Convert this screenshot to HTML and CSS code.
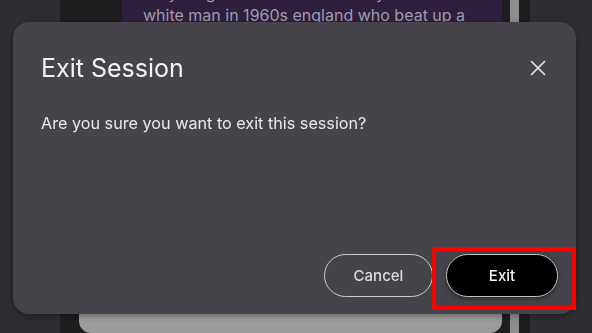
FILE: index.html
```html
<!DOCTYPE html>
<html lang="en">
<head>
  <meta charset="UTF-8" />
  <meta name="viewport" content="width=device-width, initial-scale=1.0"/>
  <title>Exit Session</title>
  <link rel="stylesheet" href="styles.css">
</head>
<body>
  <div class="app">
    <aside class="side"></aside>
    <main class="chat">
      <div class="chat-scroll">
        <div class="bubble">
          <p>for young souls? Ask me a story about a</p>
          <p>white man in 1960s england who beat up a</p>
        </div>
        <div class="composer"></div>
      </div>
      <div class="scrollbar"><div class="thumb"></div></div>
    </main>
    <aside class="side side-right"></aside>
  </div>

  <div class="overlay">
    <div class="modal">
      <div class="modal-head">
        <h2>Exit Session</h2>
        <button class="close" aria-label="Close">
          <svg width="16" height="16" viewBox="0 0 16 16">
            <path d="M1.5 1.5 L14.5 14.5 M14.5 1.5 L1.5 14.5" stroke="#e8e8ea" stroke-width="1.6" stroke-linecap="round"/>
          </svg>
        </button>
      </div>
      <p class="modal-text">Are you sure you want to exit this session?</p>
      <div class="modal-actions">
        <button class="btn btn-cancel">Cancel</button>
        <div class="highlight">
          <button class="btn btn-exit">Exit</button>
        </div>
      </div>
    </div>
  </div>
</body>
</html>
```

FILE: styles.css
```css
html,
body {
  height: 100%;
  overflow: hidden;
}

body {
  margin: 0;
  font-family: Inter, "Liberation Sans", Arial, sans-serif;
  background-color: #2e2d31;
  color: #fff;
}

.app {
  display: flex;
  height: 333px;
}

.side {
  width: 60px;
  background-color: #2e2d31;
}

.side-right {
  width: 62px;
}

.chat {
  flex: 1;
  display: flex;
  background-color: #1e1e20;
}

.chat-scroll {
  flex: 1;
  display: flex;
  flex-direction: column;
  justify-content: space-between;
  padding-right: 8px;
}

.bubble {
  margin-left: 62px;
  margin-top: -18px;
  background-color: #2e1f3e;
  padding: 0 10px 0 21px;
  height: 60px;
}

.bubble p {
  margin: 0;
  font-size: 16px;
  line-height: 22px;
  white-space: nowrap;
  color: #a29cab;
}

.composer {
  margin-left: 19px;
  height: 30px;
  background-color: #9b9b9b;
  border-radius: 0 0 12px 12px;
}

.scrollbar {
  width: 9px;
  margin-right: 11px;
}

.thumb {
  height: 333px;
  background-color: #8d8d8f;
}

.overlay {
  position: fixed;
  inset: 0;
}

.modal {
  position: absolute;
  left: 13px;
  top: 22px;
  width: 563px;
  height: 292px;
  box-sizing: border-box;
  background-color: #46444a;
  border-radius: 16px;
  box-shadow: 0 2px 6px rgba(0, 0, 0, 0.35);
  padding: 30px 18px 17px 28px;
  display: flex;
  flex-direction: column;
}

.modal-head {
  display: flex;
  justify-content: space-between;
  align-items: center;
}

.modal-head h2 {
  margin: 0;
  font-size: 25px;
  line-height: 32px;
  font-weight: 400;
  color: #f3f3f4;
}

.close {
  background: none;
  border: none;
  padding: 0;
  margin-right: 12px;
  width: 16px;
  height: 16px;
  display: flex;
  cursor: pointer;
}

.modal-text {
  margin: 27px 0 0;
  font-size: 16.2px;
  line-height: 24px;
  color: #e8e8ea;
}

.modal-actions {
  margin-top: auto;
  display: flex;
  justify-content: flex-end;
  gap: 13px;
}

.btn {
  font-family: Inter, "Liberation Sans", Arial, sans-serif;
  font-size: 15px;
  font-weight: 500;
  height: 43px;
  border-radius: 22px;
  cursor: pointer;
}

.btn-cancel {
  width: 109px;
  background: none;
  border: 1px solid #cfcfd2;
  color: #dcdcde;
}

.highlight {
  position: relative;
}

.highlight::after {
  content: "";
  position: absolute;
  left: -14px;
  right: -18px;
  top: -7px;
  bottom: -13px;
  border: 4px solid #ff0000;
  pointer-events: none;
}

.btn-exit {
  width: 112px;
  background-color: #000;
  border: 1.5px solid #c4c4c6;
  color: #f4f4f4;
  box-shadow: 0 2px 4px rgba(0, 0, 0, 0.4);
}
```
